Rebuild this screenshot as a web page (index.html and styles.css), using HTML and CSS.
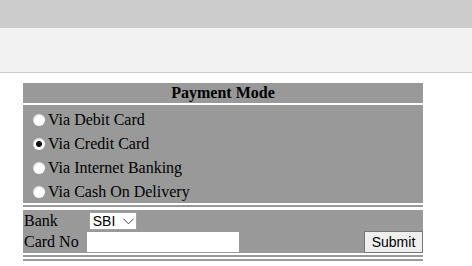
FILE: index.html
```html
<!DOCTYPE html>
<html>
<head>
<meta charset="utf-8">
<link rel="stylesheet" href="styles.css">
</head>
<body>
<div class="topbar"></div>
<div class="subbar"></div>
<div class="main">
  <div class="head">Payment Mode</div>
  <div class="gap2"></div>
  <div class="options">
    <label class="opt"><input type="radio" name="pm" class="radio"><span>Via Debit Card</span></label>
    <label class="opt"><input type="radio" name="pm" class="radio" checked><span>Via Credit Card</span></label>
    <label class="opt"><input type="radio" name="pm" class="radio"><span>Via Internet Banking</span></label>
    <label class="opt"><input type="radio" name="pm" class="radio"><span>Via Cash On Delivery</span></label>
  </div>
  <div class="sep"><div class="w2"></div><div class="g2"></div><div class="w3"></div></div>
  <div class="form">
    <div class="row1">
      <span class="lbl">Bank</span>
      <span class="selwrap">
        <select class="sel"><option>SBI</option></select>
        <svg class="chev" width="11" height="7" viewBox="0 0 11 7"><path d="M0.5 0.8 L5.5 5.8 L10.5 0.8" fill="none" stroke="#444" stroke-width="1"/></svg>
      </span>
    </div>
    <div class="row2">
      <span class="lbl">Card No</span>
      <input type="text" class="txt">
      <button class="btn">Submit</button>
    </div>
  </div>
  <div class="sep"><div class="w2"></div><div class="g2"></div><div class="w2"></div><div class="g2"></div></div>
</div>
</body>
</html>
```
FILE: styles.css
```css
html, body { margin: 0; padding: 0; background: #fff; }
body { font-family: "Liberation Serif", "Times New Roman", serif; font-size: 16px; color: #000; }
.topbar { height: 28px; background: #cccccc; }
.subbar { height: 44px; background: #f2f2f2; border-bottom: 1px solid #cccccc; }
.main { width: 400px; margin: 10px 0 0 23px; }
.head { height: 20px; line-height: 20px; background: #999999; text-align: center; font-weight: bold; }
.gap2 { height: 2px; }
.options { background: #999999; padding: 3px 0 0 0; height: 95px; }
.opt { display: flex; align-items: center; height: 24px; }
.radio { appearance: none; -webkit-appearance: none; width: 12px; height: 12px; border-radius: 50%; background: #ffffff; margin: 0 3px 0 10px; box-shadow: inset 1px 1px 1px rgba(0,0,0,0.12); }
.radio:checked { background: radial-gradient(circle, #111 0, #111 2.6px, #fff 3.4px); }
.sep .w2 { height: 2px; background: #fff; }
.sep .g2 { height: 2px; background: #999999; }
.sep .w3 { height: 3px; background: #fff; }
.form { background: #999999; height: 43px; padding-left: 1px; }
.row1 { display: flex; align-items: center; height: 21px; }
.row2 { display: flex; align-items: center; height: 22px; }
.lbl { line-height: 18px; }
.selwrap { position: relative; display: inline-block; margin-left: 31px; height: 18px; }
.sel { appearance: none; -webkit-appearance: none; width: 48px; height: 18px; border: 1px solid #a0a0a0; background: #fff; font-family: "Liberation Sans", Arial, sans-serif; font-size: 14px; line-height: 16px; padding: 0 0 0 3px; margin: 0; border-radius: 0; color: #000; }
.chev { position: absolute; left: 34px; top: 6px; pointer-events: none; }
.txt { width: 154px; height: 22px; box-sizing: border-box; border: 1px solid #999; background: #fff; margin: 0 0 0 7px; padding: 0; }
.btn { margin-left: auto; width: 59px; height: 22px; box-sizing: border-box; font-family: "Liberation Sans", Arial, sans-serif; font-size: 14px; background: #efefef; border: 1px solid #767676; border-radius: 0; padding: 0; color: #000; }
```
